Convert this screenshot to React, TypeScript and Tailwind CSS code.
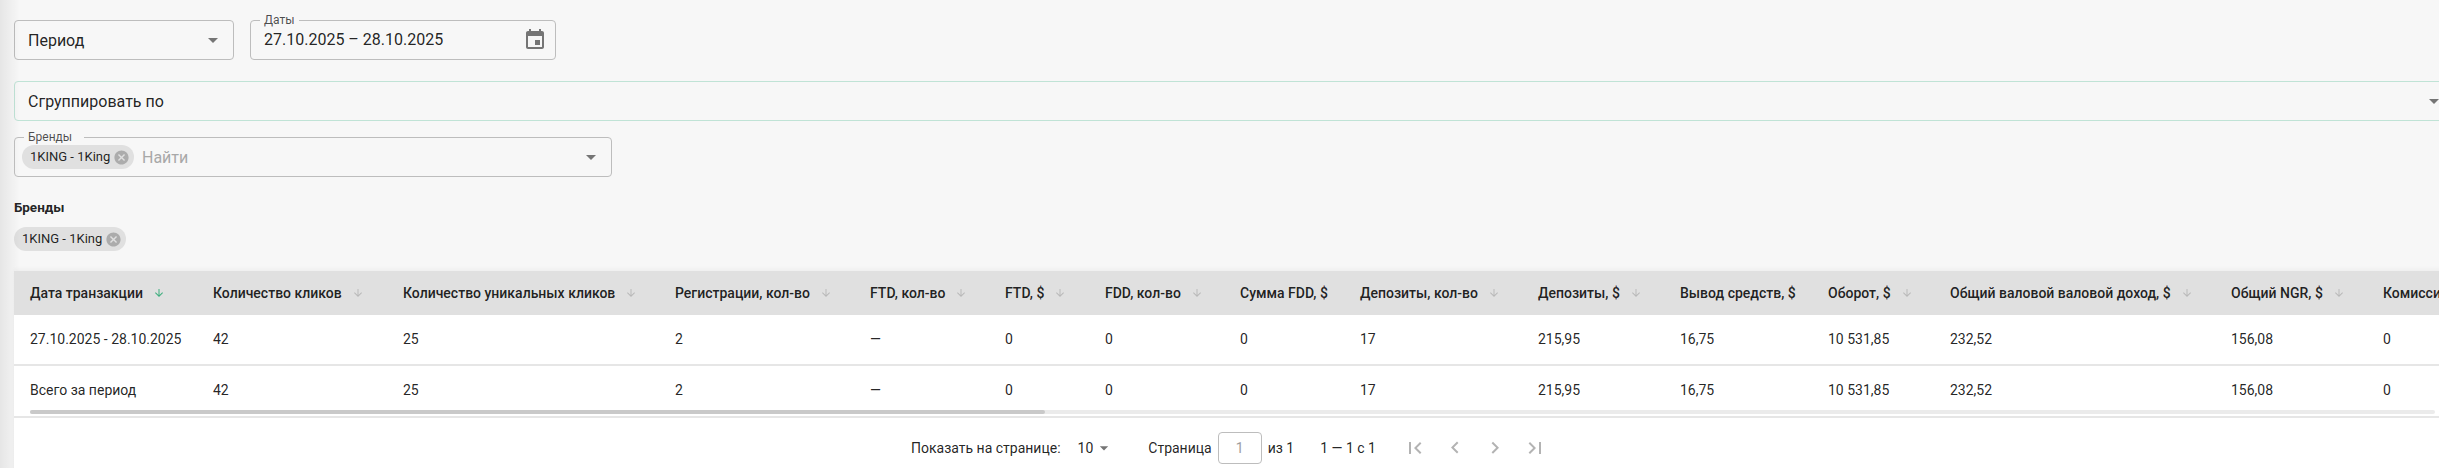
const ICONS = {
  drop: 'M7 10l5 5 5-5z',
  calendar: 'M17 12h-5v5h5v-5zM16 1v2H8V1H6v2H5c-1.11 0-1.99.9-1.99 2L3 19c0 1.1.89 2 2 2h14c1.1 0 2-.9 2-2V5c0-1.1-.9-2-2-2h-1V1h-2zm3 18H5V8h14v11z',
  cancel: 'M12 2C6.47 2 2 6.47 2 12s4.47 10 10 10 10-4.47 10-10S17.53 2 12 2zm5 13.59L15.59 17 12 13.41 8.41 17 7 15.59 10.59 12 7 8.41 8.41 7 12 10.59 15.59 7 17 8.41 13.41 12 17 15.59z',
  down: 'M20 12l-1.41-1.41L13 16.17V4h-2v12.17l-5.58-5.59L4 12l8 8 8-8z',
  first: 'M18.41 16.59L13.82 12l4.59-4.59L17 6l-6 6 6 6zM6 6h2v12H6z',
  prev: 'M15.41 16.09l-4.58-4.59 4.58-4.59L14 5.5l-6 6 6 6z',
  next: 'M8.59 16.34l4.58-4.59-4.58-4.59L10 5.75l6 6-6 6z',
  last: 'M5.59 7.41L10.18 12l-4.59 4.59L7 18l6-6-6-6zM16 6h2v12h-2z',
};

function Icon({ d, className }: { d: string; className?: string }) {
  return (
    <svg viewBox="0 0 24 24" className={className} fill="currentColor" aria-hidden="true">
      <path d={d} />
    </svg>
  );
}

function Chip() {
  return (
    <span className="inline-flex h-6 w-[112px] shrink-0 items-center justify-between rounded-full bg-[#e0e0e0] pl-2 pr-[4px] text-[13px] text-[rgba(0,0,0,0.87)]">
      1KING - 1King
      <Icon d={ICONS.cancel} className="h-[17px] w-[17px] text-[#acacac]" />
    </span>
  );
}

const columns = [
  { title: 'Дата транзакции', width: 'w-[183px]', sort: 'active' },
  { title: 'Количество кликов', width: 'w-[190px]', sort: 'idle' },
  { title: 'Количество уникальных кликов', width: 'w-[272px]', sort: 'idle' },
  { title: 'Регистрации, кол-во', width: 'w-[195px]', sort: 'idle' },
  { title: 'FTD, кол-во', width: 'w-[135px]', sort: 'idle' },
  { title: 'FTD, $', width: 'w-[100px]', sort: 'idle' },
  { title: 'FDD, кол-во', width: 'w-[135px]', sort: 'idle' },
  { title: 'Сумма FDD, $', width: 'w-[120px]', sort: 'none' },
  { title: 'Депозиты, кол-во', width: 'w-[178px]', sort: 'idle' },
  { title: 'Депозиты, $', width: 'w-[142px]', sort: 'idle' },
  { title: 'Вывод средств, $', width: 'w-[148px]', sort: 'none' },
  { title: 'Оборот, $', width: 'w-[122px]', sort: 'idle' },
  { title: 'Общий валовой валовой доход, $', width: 'w-[281px]', sort: 'idle' },
  { title: 'Общий NGR, $', width: 'w-[152px]', sort: 'idle' },
  { title: 'Комиссия, $', width: 'w-[160px]', sort: 'none' },
];

const values = ['42', '25', '2', '—', '0', '0', '0', '17', '215,95', '16,75', '10 531,85', '232,52', '156,08', '0'];
const rows = [
  ['27.10.2025 - 28.10.2025', ...values],
  ['Всего за период', ...values],
];

export default function App() {
  return (
    <div className="relative h-[468px] w-full overflow-hidden bg-[#f7f7f7] pl-[14px] font-['Roboto',sans-serif] text-[rgba(0,0,0,0.87)]">
      {/* sidebar shadow */}
      <div className="absolute inset-y-0 left-0 w-[20px] bg-gradient-to-r from-black/[0.07] to-transparent" />

      <div className="flex gap-4 pt-5">
        <div className="flex h-10 w-[220px] items-center justify-between rounded border border-[#bdbdbd] pl-[13px] pr-[8px] text-base">
          <span className="pt-[1px]">Период</span>
          <Icon d={ICONS.drop} className="h-6 w-6 text-[#757575]" />
        </div>
        <div className="relative flex h-10 w-[306px] items-center justify-between rounded border border-[#bdbdbd] pl-[13px] pr-[8px] text-base">
          <span className="absolute -top-[9px] left-[9px] bg-[#f7f7f7] px-[4px] text-xs text-[rgba(0,0,0,0.7)]">Даты</span>
          <span>27.10.2025 – 28.10.2025</span>
          <Icon d={ICONS.calendar} className="h-6 w-6 text-[#757575]" />
        </div>
      </div>

      <div className="mt-[21px] flex h-[40px] w-[2440px] items-center justify-between rounded border border-[#c0e3d6] pl-[13px] pr-[7px] text-base">
        <span className="pt-[1px]">Сгруппировать по</span>
        <Icon d={ICONS.drop} className="h-6 w-6 text-[#757575]" />
      </div>

      <div className="relative mt-[16px] flex h-10 w-[598px] items-center rounded border border-[#bdbdbd] pl-[7px] pr-[8px]">
        <span className="absolute -top-[9px] left-[9px] bg-[#f7f7f7] pl-[4px] pr-[12px] text-xs text-[rgba(0,0,0,0.7)]">Бренды</span>
        <Chip />
        <span className="ml-2 flex-1 pt-[1px] text-base text-[#a8a8a8]">Найти</span>
        <Icon d={ICONS.drop} className="h-6 w-6 text-[#757575]" />
      </div>

      <div className="mt-[22px] text-[13.5px] leading-4 font-bold">Бренды</div>
      <div className="mt-[12px] flex">
        <Chip />
      </div>

      <div className="relative mt-5 w-[2600px] bg-white shadow-[0_-2px_4px_rgba(0,0,0,0.04)]">
        <table className="table-fixed border-collapse text-left text-sm">
          <thead>
            <tr className="h-11 bg-[#e0e0e0]">
              {columns.map((col) => (
                <th key={col.title} className={`${col.width} pl-4 font-medium`}>
                  <span className="flex items-center whitespace-nowrap">
                    {col.title}
                    {col.sort !== 'none' && (
                      <Icon
                        d={ICONS.down}
                        className={col.sort === 'active' ? 'ml-[10px] h-3 w-3 text-[#3fae7f]' : 'ml-[10px] h-3 w-3 text-[#b9b9b9]'}
                      />
                    )}
                  </span>
                </th>
              ))}
            </tr>
          </thead>
          <tbody>
            {rows.map((row) => (
              <tr key={row[0]} className="h-[50px] border-b-2 border-[#e6e6e6] last:h-[52px]">
                {row.map((cell, i) => (
                  <td key={i} className="whitespace-nowrap pl-4 pb-[2px]">
                    {cell}
                  </td>
                ))}
              </tr>
            ))}
          </tbody>
        </table>

        {/* scroll bar sits on top of the last row */}
        <div className="absolute left-4 top-[139px] h-1 w-[2405px] rounded-full bg-[#ebebeb]">
          <div className="h-1 w-[1015px] rounded-full bg-[#c9c9c9]" />
        </div>

        <div className="flex h-[60px] items-center pl-[897px] text-sm">
          <span>Показать на странице:</span>
          <span className="ml-[17px]">10</span>
          <Icon d={ICONS.drop} className="ml-[1px] h-5 w-5 text-[#757575]" />
          <span className="ml-[34px]">Страница</span>
          <span className="ml-[6px] flex h-8 w-11 items-center justify-center rounded border border-[#bdbdbd] text-[#9e9e9e]">1</span>
          <span className="ml-[6px]">из 1</span>
          <span className="ml-[26px]">1 — 1 с 1</span>
          <div className="ml-[27px] flex gap-4 text-[#b3b3b3]">
            <Icon d={ICONS.first} className="h-6 w-6" />
            <Icon d={ICONS.prev} className="h-6 w-6" />
            <Icon d={ICONS.next} className="h-6 w-6" />
            <Icon d={ICONS.last} className="h-6 w-6" />
          </div>
        </div>
      </div>
    </div>
  );
}
